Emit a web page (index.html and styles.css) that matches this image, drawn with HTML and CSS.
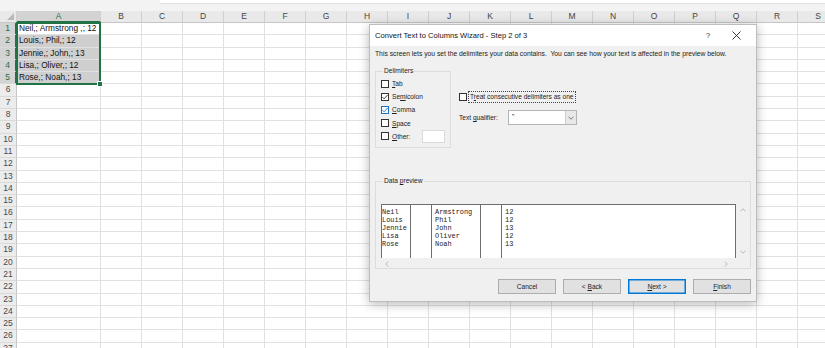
FILE: index.html
```html
<!DOCTYPE html>
<html lang="en">
<head>
  <meta charset="UTF-8" />
  <meta name="viewport" content="width=device-width, initial-scale=1.0" />
  <title>Convert Text to Columns Wizard</title>
  <link rel="stylesheet" href="styles.css">
</head>
<body>
  <div class="sheet">
    <div class="top-strip"><div class="formula-box"></div></div>
    <div class="grid" id="grid">
      <div class="selection"><span class="fill-handle"></span></div>
    </div>
  </div>

  <div class="dialog">
    <div class="dlg-title">
      <span class="dlg-caption">Convert Text to Columns Wizard - Step 2 of 3</span>
      <span class="dlg-help">?</span>
      <span class="dlg-close">
        <svg width="9" height="9" viewBox="0 0 9 9"><path d="M0.5 0.5L8.5 8.5M8.5 0.5L0.5 8.5" stroke="#222" stroke-width="0.9" fill="none"/></svg>
      </span>
    </div>

    <div class="dlg-body">
      <p class="intro">This screen lets you set the delimiters your data contains.&nbsp; You can see how your text is affected in the preview below.</p>

      <div class="options">
        <fieldset class="group delims">
          <legend>Delimiters</legend>
          <label class="opt"><span class="box"></span><span><u>T</u>ab</span></label>
          <label class="opt"><span class="box checked"><svg width="8" height="8" viewBox="0 0 8 8"><polyline points="1.4,4.1 3.1,5.8 6.7,1.9" fill="none" stroke="#222" stroke-width="0.9"/></svg></span><span>Se<u>m</u>icolon</span></label>
          <label class="opt"><span class="box checked blue"><svg width="8" height="8" viewBox="0 0 8 8"><polyline points="1.4,4.1 3.1,5.8 6.7,1.9" fill="none" stroke="#1a73c8" stroke-width="0.9"/></svg></span><span><u>C</u>omma</span></label>
          <label class="opt"><span class="box"></span><span><u>S</u>pace</span></label>
          <label class="opt"><span class="box"></span><span><u>O</u>ther:</span><span class="other-input"></span></label>
        </fieldset>

        <div class="side">
          <label class="opt consecutive"><span class="box"></span><span class="focus-ring">T<u>r</u>eat consecutive delimiters as one</span></label>
          <div class="qualifier">
            <span>Text <u>q</u>ualifier:</span>
            <div class="select">
              <span class="select-value">"</span>
              <span class="select-arrow">
                <svg width="6" height="4" viewBox="0 0 6 4"><polyline points="0.5,0.8 3,3.2 5.5,0.8" fill="none" stroke="#606060" stroke-width="0.8"/></svg>
              </span>
            </div>
          </div>
        </div>
      </div>

      <fieldset class="group preview">
        <legend>Data <u>p</u>review</legend>
        <div class="preview-frame">
          <div class="preview-box">
            <div class="pcol c1">Neil<br>Louis<br>Jennie<br>Lisa<br>Rose</div>
            <div class="pcol c2"></div>
            <div class="pcol c3">Armstrong<br>Phil<br>John<br>Oliver<br>Noah</div>
            <div class="pcol c4"></div>
            <div class="pcol c5">12<br>12<br>13<br>12<br>13</div>
          </div>
          <div class="vscroll">
            <svg width="6" height="4" viewBox="0 0 6 4"><polyline points="0.5,3.2 3,0.8 5.5,3.2" fill="none" stroke="#a8a8a8" stroke-width="0.8"/></svg>
            <svg width="6" height="4" viewBox="0 0 6 4"><polyline points="0.5,0.8 3,3.2 5.5,0.8" fill="none" stroke="#a8a8a8" stroke-width="0.8"/></svg>
          </div>
        </div>
        <div class="hscroll">
          <svg width="4" height="6" viewBox="0 0 4 6"><polyline points="3.2,0.5 0.8,3 3.2,5.5" fill="none" stroke="#a8a8a8" stroke-width="0.8"/></svg>
          <svg width="4" height="6" viewBox="0 0 4 6"><polyline points="0.8,0.5 3.2,3 0.8,5.5" fill="none" stroke="#a8a8a8" stroke-width="0.8"/></svg>
        </div>
      </fieldset>

      <div class="buttons">
        <button class="btn">Cancel</button>
        <button class="btn">&lt; <u>B</u>ack</button>
        <button class="btn default"><u>N</u>ext &gt;</button>
        <button class="btn"><u>F</u>inish</button>
      </div>
    </div>
  </div>

  <script>
    const grid = document.getElementById("grid");
    const letters = "ABCDEFGHIJKLMNOPQRS".split("");
    const values = [
      "Neil,; Armstrong ,; 12",
      "Louis,; Phil,; 12",
      "Jennie,; John,; 13",
      "Lisa,; Oliver,; 12",
      "Rose,; Noah,; 13"
    ];

    function cell(cls, text) {
      const div = document.createElement("div");
      div.className = cls;
      if (text) div.textContent = text;
      grid.insertBefore(div, grid.querySelector(".selection"));
    }

    cell("corner");
    letters.forEach(l => cell(l === "A" ? "col-head active" : "col-head", l));

    for (let r = 1; r <= 27; r++) {
      cell(r <= 5 ? "row-head active" : "row-head", String(r));
      letters.forEach(l => {
        if (l === "A" && r <= 5) {
          cell(r === 1 ? "cell" : "cell picked", values[r - 1]);
        } else {
          cell("cell");
        }
      });
    }
  </script>
</body>
</html>
```

FILE: styles.css
```css
html, body {
  margin: 0;
  padding: 0;
  width: 825px;
  height: 348px;
  overflow: hidden;
  background: white;
  font-family: "Liberation Sans", Arial, sans-serif;
  color: #222;
}

.sheet {
  width: 860px;
}

.top-strip {
  height: 11px;
  background: #f3f3f3;
}

.formula-box {
  margin-left: 160px;
  height: 3px;
  background: white;
  border-bottom: 1px solid #e0e0e0;
}

.grid {
  display: grid;
  grid-template-columns: 17px 84px repeat(18, 41px);
  grid-template-rows: 12px repeat(27, 12.3px);
  position: relative;
}

.corner,
.col-head {
  background: #e9e9e9;
  border-right: 1px solid #cfcfcf;
  border-bottom: 1px solid #c6c6c6;
  box-sizing: border-box;
}

.corner {
  position: relative;
}

.corner::after {
  content: "";
  position: absolute;
  right: 2px;
  bottom: 2px;
  border-left: 7px solid transparent;
  border-bottom: 7px solid #b9b9b9;
}

.col-head {
  font-size: 8.5px;
  line-height: 11px;
  text-align: center;
  color: #444;
}

.col-head.active {
  background: #d3d3d3;
  color: #217346;
  border-bottom: 2px solid #217346;
}

.row-head {
  background: #ececec;
  border-right: 1px solid #c6c6c6;
  border-bottom: 1px solid #dadada;
  box-sizing: border-box;
  font-size: 8.5px;
  line-height: 11.5px;
  text-align: center;
  color: #4a4a4a;
}

.row-head.active {
  background: #d3d3d3;
  color: #2a6c45;
  border-right: 2px solid #217346;
}

.cell {
  border-right: 1px solid #e1e1e1;
  border-bottom: 1px solid #e1e1e1;
  box-sizing: border-box;
  font-size: 8.3px;
  line-height: 11.5px;
  padding-left: 2px;
  white-space: nowrap;
  color: #111;
}

.cell.picked {
  background: #cfcfcf;
}

/* selection outline sits over cells A1:A5 */
.selection {
  position: absolute;
  grid-column: 2 / 3;
  grid-row: 2 / 7;
  top: -1px;
  left: -1px;
  right: 0;
  bottom: -1px;
  border: 2px solid #217346;
  pointer-events: none;
}

.fill-handle {
  position: absolute;
  right: -4px;
  bottom: -4px;
  width: 4px;
  height: 4px;
  background: #217346;
  border: 1px solid white;
}

/* dialog */

.dialog {
  position: absolute;
  left: 369px;
  top: 24px;
  width: 388px;
  height: 278px;
  box-sizing: border-box;
  background: #f0f0f0;
  border: 1px solid #bdbdbd;
  box-shadow: 0 2px 10px rgba(0, 0, 0, 0.28);
  font-size: 6.6px;
}

.dlg-title {
  height: 21px;
  background: white;
  display: flex;
  align-items: center;
  padding-left: 5px;
}

.dlg-caption {
  flex: 1;
  font-size: 7.6px;
  color: #111;
}

.dlg-help {
  font-size: 7.5px;
  width: 14px;
  color: #333;
}

.dlg-close {
  width: 24px;
  display: flex;
  margin-left: 12px;
}

.dlg-body {
  padding: 0 5px;
}

.intro {
  margin: 3px 0 0 0;
  font-size: 6.75px;
  line-height: 10px;
  white-space: nowrap;
}

.options {
  display: flex;
  gap: 8px;
  margin-top: 7px;
}

.group {
  margin: 0;
  border: 1px solid #dcdcdc;
  box-sizing: border-box;
  min-width: 0;
}

.group legend {
  padding: 0 1px;
  margin-left: 2px;
  line-height: 10px;
  font-size: 6.6px;
}

.delims {
  width: 76px;
  height: 82px;
  padding: 1px 0 0 5px;
}

.opt {
  display: flex;
  align-items: center;
  height: 13.2px;
  gap: 3px;
}

.box {
  width: 8px;
  height: 8px;
  box-sizing: border-box;
  border: 1px solid #333;
  background: white;
  display: flex;
  align-items: center;
  justify-content: center;
  flex-shrink: 0;
}

.box svg {
  margin: -1px;
}

.box.blue {
  border-color: #1a73c8;
}

.other-input {
  width: 23px;
  height: 13px;
  box-sizing: border-box;
  background: white;
  border: 1px solid #dadada;
  margin-left: 9px;
}

.side {
  padding-top: 24px;
}

.consecutive {
  gap: 1px;
}

.focus-ring {
  border: 1px dotted #444;
  padding: 0 1px;
  line-height: 10px;
}

.qualifier {
  display: flex;
  align-items: center;
  margin-top: 7px;
}

.qualifier > span {
  width: 49px;
}

.select {
  width: 69px;
  height: 15px;
  box-sizing: border-box;
  background: white;
  border: 1px solid #b4b4b4;
  display: flex;
}

.select-value {
  flex: 1;
  padding-left: 3px;
  line-height: 12px;
}

.select-arrow {
  width: 10px;
  background: #e8e8e8;
  border-left: 1px solid #cfcfcf;
  display: flex;
  align-items: center;
  justify-content: center;
}

.preview {
  width: 376px;
  height: 93px;
  margin-top: 28px;
  padding: 18px 0 0 5px;
}

.preview-frame {
  display: flex;
  height: 54px;
}

.preview-box {
  flex: 1;
  display: flex;
  background: white;
  border: 1px solid #6e6e6e;
  border-bottom: none;
  font-family: "Liberation Mono", "Courier New", monospace;
  font-size: 6.9px;
  line-height: 8.1px;
  color: #222;
}

.pcol {
  border-right: 1px solid #6e6e6e;
  padding-top: 3px;
  box-sizing: border-box;
  white-space: nowrap;
}

.c1 { width: 29px; }
.c2 { width: 21px; }
.c3 { width: 49px; padding-left: 3px; }
.c4 { width: 21px; }
.c5 { flex: 1; border-right: none; padding-left: 3px; }

.vscroll {
  width: 14px;
  display: flex;
  flex-direction: column;
  justify-content: space-between;
  align-items: center;
  padding: 4px 0;
  box-sizing: border-box;
}

.hscroll {
  width: 355px;
  height: 12px;
  display: flex;
  justify-content: space-between;
  align-items: center;
  padding: 0 8px 0 4px;
  box-sizing: border-box;
}

.buttons {
  display: flex;
  justify-content: flex-end;
  gap: 7px;
  margin-top: 10px;
}

.btn {
  width: 58px;
  height: 15px;
  padding: 0;
  font-family: "Liberation Sans", Arial, sans-serif;
  font-size: 6.6px;
  color: #222;
  background: #e1e1e1;
  border: 1px solid #adadad;
}

.btn.default {
  border-color: #0078d7;
  box-shadow: inset 0 0 0 0.5px #0078d7;
}
```
